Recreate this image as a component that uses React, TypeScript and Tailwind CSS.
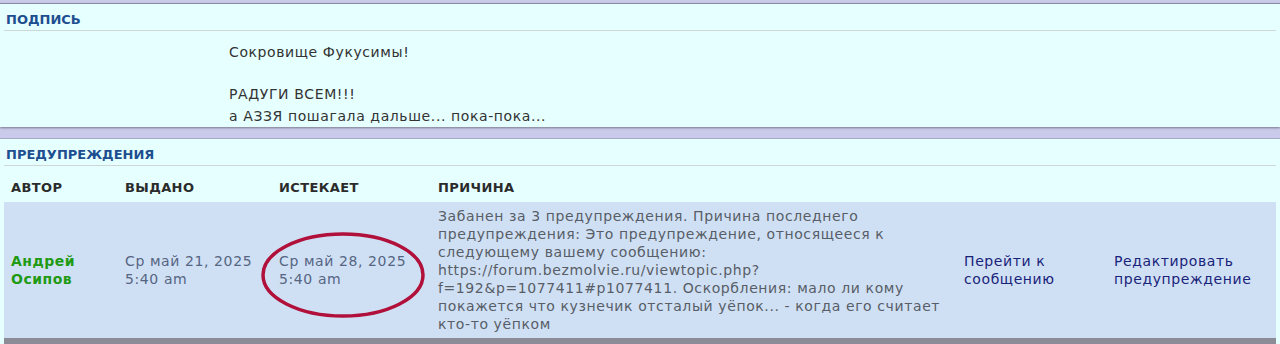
import React from "react";

const reasonLines = [
  "Забанен за 3 предупреждения. Причина последнего",
  "предупреждения: Это предупреждение, относящееся к",
  "следующему вашему сообщению:",
  "https://forum.bezmolvie.ru/viewtopic.php?",
  "f=192&p=1077411#p1077411. Оскорбления: мало ли кому",
  "покажется что кузнечик отсталый уёпок... - когда его считает",
  "кто-то уёпком",
];

const App: React.FC = () => {
  return (
    <div className="h-[344px] w-full overflow-hidden bg-[#cacbea] pt-[3px] font-['DejaVu_Sans',sans-serif]">
      {/* Подпись */}
      <div className="h-[124px] border-t border-[#8a8aa6] bg-[#e6ffff] px-[4px] shadow-[0_1px_2px_#7a7a90]">
        <h3 className="border-b border-[#cfd6d6] px-[2px] pt-[9px] pb-[3px] text-[13px] leading-[14px] font-bold text-[#1d4e8f]">
          ПОДПИСЬ
        </h3>
        <div className="pl-[225px] pt-[11px] text-[14px] leading-[21px] tracking-[0.6px] text-[#333]">
          <div>Сокровище Фукусимы!</div>
          <div>&nbsp;</div>
          <div>РАДУГИ ВСЕМ!!!</div>
          <div className="leading-[23px]">а АЗЗЯ пошагала дальше... пока-пока...</div>
        </div>
      </div>

      {/* Предупреждения */}
      <div className="mt-[11px] h-[206px] border-t border-[#a9aacb] bg-[#e6ffff] px-[4px]">
        <h3 className="border-b border-[#cfd6d6] px-[2px] pt-[9px] pb-[3px] text-[13px] leading-[14px] font-bold text-[#1d4e8f]">
          ПРЕДУПРЕЖДЕНИЯ
        </h3>

        <div className="grid grid-cols-[114px_154px_159px_526px_150px_1fr] pt-[12px] text-[13px] leading-[20px] font-bold tracking-[0.4px] text-[#2b2b2b]">
          <div className="px-[7px]">АВТОР</div>
          <div className="px-[7px]">ВЫДАНО</div>
          <div className="px-[7px]">ИСТЕКАЕТ</div>
          <div className="px-[7px]">ПРИЧИНА</div>
          <div />
          <div />
        </div>

        <div className="relative mt-[4px] grid h-[142px] grid-cols-[114px_154px_159px_526px_150px_1fr] items-center border-b-[6px] border-[#8c8c98] bg-[#cfe0f5] text-[14px] leading-[18px] tracking-[0.6px]">
          <div className="px-[7px] font-bold tracking-[0.5px] text-[#1f9a12]">
            Андрей
            <br />
            Осипов
          </div>
          <div className="px-[7px] text-[#566582]">
            Ср май 21, 2025
            <br />
            5:40 am
          </div>
          <div className="px-[7px] text-[#566582]">
            Ср май 28, 2025
            <br />
            5:40 am
          </div>
          <div className="whitespace-nowrap px-[7px] text-[#585d66]">
            {reasonLines.map((l) => (
              <div key={l}>{l}</div>
            ))}
          </div>
          <div className="px-[7px] text-[#1a237a]">
            Перейти к
            <br />
            сообщению
          </div>
          <div className="px-[7px] text-[#1a237a]">
            Редактировать
            <br />
            предупреждение
          </div>

          {/* красный овал поверх даты */}
          <svg
            className="pointer-events-none absolute left-[254px] top-[29px]"
            width="170"
            height="88"
            viewBox="0 0 170 88"
          >
            <ellipse cx="85" cy="44" rx="80" ry="41" fill="none" stroke="#b0103a" strokeWidth="3.5" />
          </svg>
        </div>
      </div>
    </div>
  );
};

export default App;
